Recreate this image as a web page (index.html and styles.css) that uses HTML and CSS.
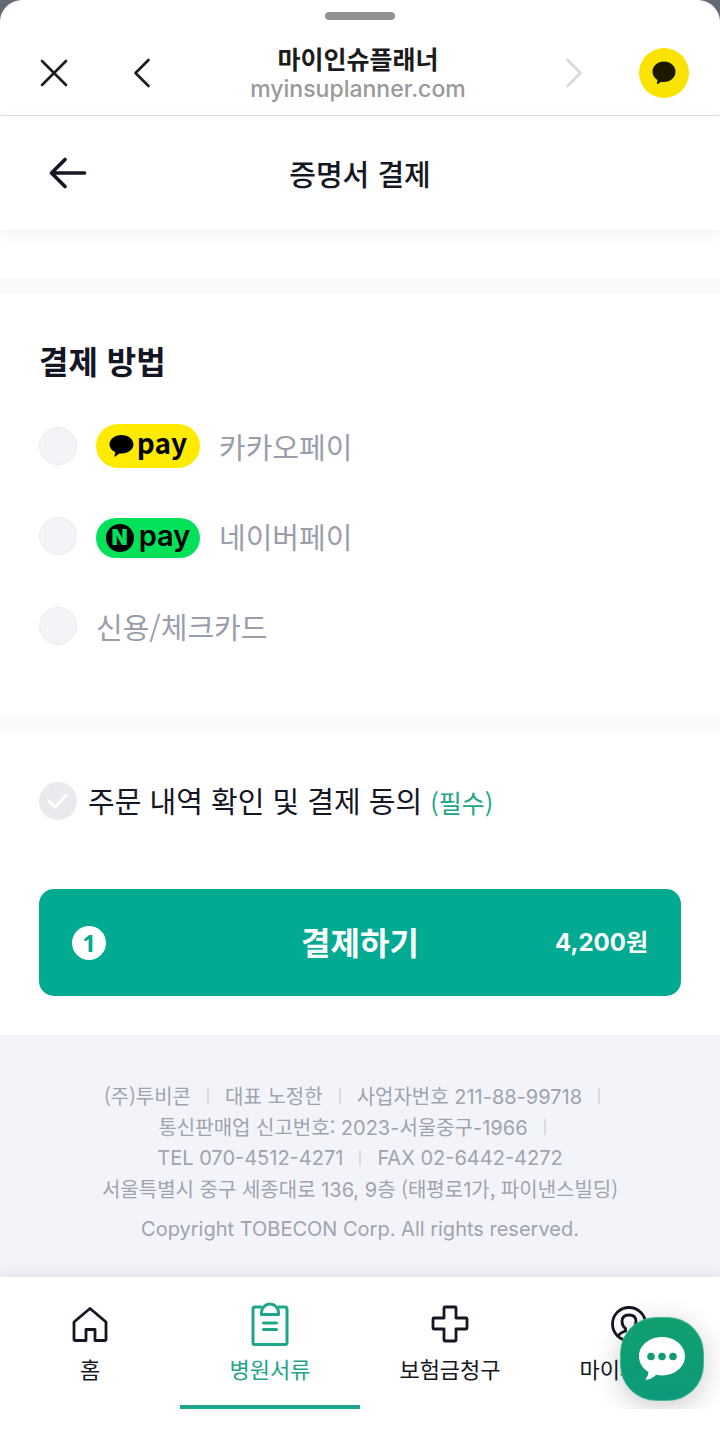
FILE: index.html
```html
<!DOCTYPE html>
<html lang="ko">
<head>
<meta charset="utf-8">
<meta name="viewport" content="width=device-width, initial-scale=1">
<title>증명서 결제</title>
<link rel="stylesheet" href="styles.css">
</head>
<body>
<div class="sheet">
  <header class="browser-bar">
    <div class="grabber"></div>
    <div class="browser-row">
      <div class="browser-side">
        <button class="icon-button" type="button" aria-label="닫기">
          <svg width="30" height="30" viewBox="0 0 30 30" fill="none" stroke="#1b1b1b" stroke-width="2.6" stroke-linecap="round"><path d="M3 3 27 27M27 3 3 27"/></svg>
        </button>
        <button class="icon-button" type="button" aria-label="이전">
          <svg width="18" height="30" viewBox="0 0 18 30" fill="none" stroke="#1b1b1b" stroke-width="2.6" stroke-linecap="round" stroke-linejoin="round"><path d="M15.500 2 2.500 15 15.500 28"/></svg>
        </button>
      </div>
      <div class="site">
        <strong class="site-name">마이인슈플래너</strong>
        <span class="site-url">myinsuplanner.com</span>
      </div>
      <div class="browser-side">
        <button class="icon-button" type="button" aria-label="다음" disabled>
          <svg width="18" height="30" viewBox="0 0 18 30" fill="none" stroke="#d8d8d8" stroke-width="2.6" stroke-linecap="round" stroke-linejoin="round"><path d="M2.500 2 15.500 15 2.500 28"/></svg>
        </button>
        <button class="icon-button" type="button" aria-label="카카오톡 공유">
          <svg width="50" height="50" viewBox="0 0 50 50"><circle cx="25" cy="25" r="25" fill="#fae300"/><path fill="#1c1800" d="M25 13.500c6.400 0 11.500 4.500 11.500 10.200S31.400 34 25 34c-1 0-1.800-.1-2.700-.3l-3.600 2.400c-.5.300-.9 0-.8-.5l.6-3.700c-3-1.800-5-4.800-5-8.200 0-5.700 5.100-10.200 11.500-10.200Z"/></svg>
        </button>
      </div>
    </div>
  </header>

  <div class="app-bar">
    <button class="icon-button" type="button" aria-label="뒤로">
      <svg width="38" height="32" viewBox="0 0 38 32" fill="none" stroke="#141624" stroke-width="3.6" stroke-linecap="round" stroke-linejoin="round"><path d="M16 2.500 2.500 16 16 29.500M3 16h32.500"/></svg>
    </button>
    <h1 class="app-title">증명서 결제</h1>
  </div>

  <main>
    <form class="form">
      <fieldset class="methods">
        <legend class="section-title">결제 방법</legend>
        <div class="method-list">
          <label class="method">
            <input class="radio" type="radio" name="method">
            <span class="pay-badge pay-kakao">
              <svg width="25" height="22" viewBox="0 0 24 22" aria-hidden="true"><path d="M12 0c6.600 0 12 4.100 12 9.300s-5.400 9.300-12 9.300c-.8 0-1.500 0-2.200-.2l-4.100 3.100c-.6.400-1 .1-.8-.5l1-3.700C2.400 15.700 0 12.700 0 9.300 0 4.100 5.400 0 12 0Z"/></svg>
              <span class="kakao-word">pay</span>
            </span>
            <span>카카오페이</span>
          </label>
          <label class="method">
            <input class="radio" type="radio" name="method">
            <span class="pay-badge pay-naver">
              <span class="naver-mark">N</span>
              <span class="naver-word">pay</span>
            </span>
            <span>네이버페이</span>
          </label>
          <label class="method">
            <input class="radio" type="radio" name="method">
            <span>신용/체크카드</span>
          </label>
        </div>
      </fieldset>

      <div class="confirm">
        <label class="consent">
          <span class="check">
            <input class="check-input" type="checkbox">
            <svg class="check-icon" width="22" height="18" viewBox="0 0 22 18" fill="none" stroke="#fff" stroke-width="3" stroke-linecap="round" stroke-linejoin="round" aria-hidden="true"><path d="M2.500 9.500 8 15 19.500 3"/></svg>
          </span>
          <span>주문 내역 확인 및 결제 동의 <em class="required">(필수)</em></span>
        </label>
        <button class="submit" type="button">
          <span class="count">1</span>
          <span class="submit-text">결제하기</span>
          <span class="price">4,200원</span>
        </button>
      </div>
    </form>
  </main>

  <footer class="company">
    <p class="company-line"><span>(주)투비콘</span><i class="bar"></i><span>대표 노정한</span><i class="bar"></i><span>사업자번호 <span class="num">211-88-99718</span></span><i class="bar"></i></p>
    <p class="company-line"><span>통신판매업 신고번호: <span class="num">2023-</span>서울중구<span class="num">-1966</span></span><i class="bar"></i></p>
    <p class="company-line"><span class="num">TEL 070-4512-4271</span><i class="bar"></i><span class="num">FAX 02-6442-4272</span></p>
    <p class="company-line"><span>서울특별시 중구 세종대로 <span class="num">136, 9</span>층 (태평로<span class="num">1</span>가, 파이낸스빌딩)</span></p>
    <p class="company-line copyright"><span class="num">Copyright TOBECON Corp. All rights reserved.</span></p>
  </footer>

  <nav class="tabs">
    <a class="tab" href="#home">
      <svg class="tab-icon" width="44" height="44" viewBox="0 0 44 44" fill="none" stroke="currentColor" stroke-width="2.800" stroke-linejoin="round"><path d="M22 6.500 38 20v17.500a1 1 0 0 1-1 1H27V27.500h-9v11H7a1 1 0 0 1-1-1V20Z"/></svg>
      <span>홈</span>
    </a>
    <a class="tab tab-active" href="#documents" aria-current="page">
      <svg class="tab-icon" width="44" height="44" viewBox="0 0 44 44" fill="none" stroke="currentColor" stroke-width="3" stroke-linejoin="round" stroke-linecap="round"><path d="M13 5H7a2 2 0 0 0-2 2v33.500a2 2 0 0 0 2 2h30a2 2 0 0 0 2-2V7a2 2 0 0 0-2-2h-6"/><path d="M13.500 12.500v-2a8.500 8.500 0 0 1 17 0v2Z"/><path d="M15.500 21h13M15.500 27.500h13"/></svg>
      <span>병원서류</span>
    </a>
    <a class="tab" href="#claims">
      <svg class="tab-icon" width="44" height="44" viewBox="0 0 44 44" fill="none" stroke="currentColor" stroke-width="2.800" stroke-linejoin="round"><path d="M17 5h10a1 1 0 0 1 1 1v10h10a1 1 0 0 1 1 1v9a1 1 0 0 1-1 1H28v11a1 1 0 0 1-1 1H17a1 1 0 0 1-1-1V27H6a1 1 0 0 1-1-1v-9a1 1 0 0 1 1-1h10V6a1 1 0 0 1 1-1Z"/></svg>
      <span>보험금청구</span>
    </a>
    <a class="tab" href="#my">
      <svg class="tab-icon" width="44" height="44" viewBox="0 0 44 44" fill="none" stroke="currentColor" stroke-width="2.800"><circle cx="21" cy="22" r="16.500"/><path d="M10 34c2-3 4-4 7.500-5v-2.500C15 24.500 14 22 14 19.500c0-4.500 3-6.500 7-6.500s7 2 7 6.500c0 2.500-1 5-3.500 7V29c3.500 1 5.500 2 7.500 5"/></svg>
      <span>마이페이지</span>
    </a>
    <button class="chat" type="button" aria-label="채팅 상담">
      <svg width="46" height="44" viewBox="0 0 46 44"><path fill="#fff" d="M23 0c12.700 0 23 8.600 23 19.200S35.700 38.400 23 38.400c-2 0-4-.2-5.800-.6-3 2.700-6.500 4.700-9.500 5-1 .1-1.400-.8-.7-1.500 1.600-1.700 2.300-3.900 2.300-6.400C3.700 31.400 0 25.700 0 19.200 0 8.600 10.300 0 23 0Z"/><g fill="#119c74"><circle cx="12" cy="19.500" r="3.800"/><circle cx="23" cy="19.500" r="3.800"/><circle cx="34" cy="19.500" r="3.800"/></g></svg>
    </button>
  </nav>
</div>
</body>
</html>
```

FILE: styles.css
```css
* {
  box-sizing: border-box;
}

body {
  margin: 0;
  background: #626b74;
  color: #141624;
  font-family: "Noto Sans CJK KR", sans-serif;
}

h1,
p,
fieldset {
  margin: 0;
  padding: 0;
  border: 0;
}

button {
  padding: 0;
  border: 0;
  background: none;
  color: inherit;
  font: inherit;
  cursor: pointer;
}

.sheet {
  min-height: 100vh;
  border-radius: 22px 22px 0 0;
  background: #fff;
  overflow: hidden;
}

.browser-bar {
  display: flex;
  flex-direction: column;
  align-items: center;
  gap: 22px;
  padding: 12px 31px 11px;
  border-bottom: 1px solid #dedede;
}

.grabber {
  width: 70px;
  height: 8px;
  border-radius: 4px;
  background: #929292;
}

.browser-row {
  display: grid;
  grid-template-columns: 1fr auto 1fr;
  align-items: center;
  width: 100%;
}

.browser-side {
  display: flex;
  align-items: center;
  gap: 64px;
  padding-left: 8px;
}

.browser-side:last-child {
  justify-content: flex-end;
  gap: 56px;
  padding-left: 0;
}

.icon-button {
  display: flex;
}

.site {
  display: flex;
  flex-direction: column;
  align-items: center;
  padding-right: 4px;
}

.site-name {
  font-size: 25px;
  font-weight: 700;
  line-height: 32px;
  color: #1b1b1b;
}

.site-url {
  font-family: Inter, sans-serif;
  font-size: 23px;
  font-weight: 500;
  line-height: 30px;
  color: #999;
}

.app-bar {
  display: grid;
  grid-template-columns: 38px 1fr 38px;
  align-items: center;
  height: 114px;
  padding: 0 49px;
  box-shadow: 0 4px 14px rgba(20, 22, 36, 0.06);
}

.app-title {
  font-size: 29px;
  font-weight: 500;
  line-height: 44px;
  text-align: center;
}

.methods {
  margin-top: 48px;
  padding: 42px 39px 69px;
  border-top: 16px solid #f9fafb;
  border-bottom: 16px solid #f9fafb;
}

.section-title {
  float: left;
  width: 100%;
  padding: 0;
  font-size: 32px;
  font-weight: 700;
  line-height: 48px;
}

.method-list {
  display: flex;
  flex-direction: column;
  gap: 46px;
  clear: both;
  padding-top: 40px;
}

.method {
  display: flex;
  align-items: center;
  gap: 19px;
  min-height: 44px;
  font-size: 29px;
  line-height: 44px;
  color: #9a9eab;
}

.radio {
  appearance: none;
  width: 38px;
  height: 38px;
  margin: 0;
  border: 1px solid #e9ebee;
  border-radius: 50%;
  background: #f2f4f8;
}

.radio:checked {
  border: 10px solid #02aa91;
}

.pay-badge {
  display: flex;
  align-items: center;
  justify-content: center;
  width: 104px;
  border-radius: 22px;
  color: #000;
  font-weight: 700;
}

.pay-kakao {
  gap: 3px;
  height: 44px;
  background: #ffeb00;
  font-size: 28px;
}

.kakao-word {
  padding-bottom: 8px;
}

.pay-naver {
  gap: 5px;
  height: 40px;
  margin-top: 3px;
  background: #03e15b;
  font-family: Inter, sans-serif;
  font-size: 29px;
  font-weight: 600;
  line-height: 32px;
}

.naver-word {
  padding-bottom: 4px;
}

.naver-mark {
  width: 28px;
  height: 28px;
  border-radius: 50%;
  background: #000;
  color: #03e15b;
  font-size: 21px;
  font-weight: 900;
  line-height: 28px;
  text-align: center;
}

.confirm {
  display: flex;
  flex-direction: column;
  gap: 65px;
  padding: 45px 39px 39px;
}

.consent {
  display: flex;
  align-items: center;
  gap: 11px;
  font-size: 29px;
  line-height: 44px;
}

.check {
  display: grid;
  place-items: center;
}

.check-input,
.check-icon {
  grid-area: 1 / 1;
}

.check-input {
  appearance: none;
  width: 38px;
  height: 38px;
  margin: 0;
  border-radius: 50%;
  background: #e8eaed;
}

.check-input:checked {
  background: #02aa91;
}

.check-icon {
  pointer-events: none;
}

.required {
  color: #1ca588;
  font-size: 25px;
  font-style: normal;
}

.submit {
  display: grid;
  grid-template-columns: 1fr auto 1fr;
  align-items: center;
  width: 100%;
  height: 107px;
  padding: 0 33px;
  border-radius: 15px;
  background: #02aa91;
  color: #fff;
}

.count {
  width: 34px;
  height: 34px;
  border-radius: 50%;
  background: #fff;
  color: #02aa91;
  font-family: "Noto Sans", sans-serif;
  font-size: 24px;
  font-weight: 700;
  line-height: 34px;
}

.submit-text,
.price {
  padding-bottom: 4px;
}

.submit-text {
  font-size: 32px;
  font-weight: 700;
  line-height: 48px;
}

.price {
  font-family: Inter, "Noto Sans CJK KR", sans-serif;
  font-size: 24px;
  font-weight: 700;
  text-align: right;
}

.company {
  display: flex;
  flex-direction: column;
  align-items: center;
  padding: 45px 20px 33px;
  background: #f2f4f9;
  color: #9fa3ae;
  font-size: 20px;
  line-height: 31px;
}

.company-line {
  display: flex;
  flex-wrap: wrap;
  align-items: center;
  justify-content: center;
  min-height: 31px;
}

.num {
  font-family: Inter, sans-serif;
  line-height: 20px;
}

.bar {
  width: 2px;
  height: 16px;
  margin: 0 16px;
  background: #d9dbe1;
}

.copyright {
  margin-top: 9px;
}

.tabs {
  position: relative;
  display: grid;
  grid-template-columns: repeat(4, 1fr);
  height: 132px;
  box-shadow: 0 0 14px rgba(20, 22, 36, 0.12);
  clip-path: inset(-20px 0 0 0);
}

.tab {
  display: flex;
  flex-direction: column;
  align-items: center;
  gap: 6px;
  padding-top: 25px;
  background: #fff;
  color: #141624;
  font-size: 22px;
  line-height: 32px;
  text-decoration: none;
}

.tab-active {
  border-bottom: 4px solid #1ca588;
  color: #1ca588;
}

.chat {
  position: absolute;
  right: 16px;
  bottom: 8px;
  display: flex;
  align-items: center;
  justify-content: center;
  width: 84px;
  height: 84px;
  border: 1px solid #45b698;
  border-radius: 36px;
  background: linear-gradient(#119f70, #0c9a7c);
  box-shadow: 0 6px 28px rgba(0, 0, 0, 0.2);
}
```
